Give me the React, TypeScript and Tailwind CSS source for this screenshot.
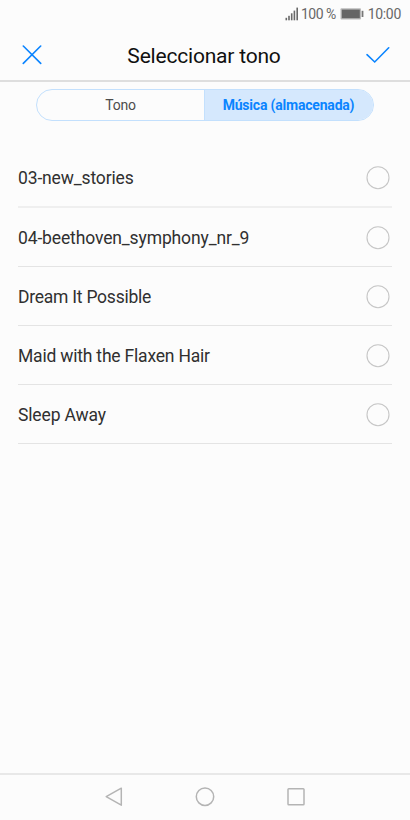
const songs = [
  { name: '03-new_stories', line: 'bg-[#efefef] h-[2px]', tracking: 'tracking-[-0.14px]' },
  { name: '04-beethoven_symphony_nr_9', line: 'bg-[#e4e4e4] h-px', tracking: 'tracking-[-0.13px]' },
  { name: 'Dream It Possible', line: 'bg-[#e4e4e4] h-px', tracking: 'tracking-[-0.24px]' },
  { name: 'Maid with the Flaxen Hair', line: 'bg-[#e4e4e4] h-px', tracking: 'tracking-[-0.2px]' },
  { name: 'Sleep Away', line: 'bg-[#e4e4e4] h-px', tracking: 'tracking-[-0.14px]' },
];

function StatusBar() {
  return (
    <div className="flex h-7 shrink-0 items-center justify-end pr-[9px] text-[14px] leading-7 text-[#686868]">
      <svg className="mr-[2px]" width="14" height="14" viewBox="0 0 14 14" fill="#686868">
        <rect x="0.5" y="10.8" width="1.6" height="2.5" />
        <rect x="3.2" y="8.8" width="1.6" height="4.5" />
        <rect x="5.9" y="6.3" width="1.6" height="7" />
        <rect x="8.6" y="3.6" width="1.6" height="9.7" />
        <rect x="11.4" y="0.6" width="1.6" height="12.7" />
      </svg>
      <span className="tracking-[-0.55px]">100 %</span>
      <svg className="mr-1 ml-[4px]" width="24" height="12" viewBox="0 0 24 12">
        <rect x="0.5" y="0.2" width="20.5" height="11.3" rx="1" fill="#b9b9b9" />
        <rect x="1.8" y="1.6" width="18" height="8.6" fill="#656565" />
        <rect x="21.6" y="2.8" width="1.8" height="6.2" fill="#777" />
      </svg>
      <span className="tracking-[-0.3px]">10:00</span>
    </div>
  );
}

export default function App() {
  return (
    <div className="flex h-[820px] w-[410px] flex-col overflow-hidden bg-[#fcfcfc] font-['Roboto',sans-serif]">
      <StatusBar />
      <header className="flex h-[54px] shrink-0 items-center justify-between border-b-2 border-[#dedede] px-[22px] pt-[2px]">
        <svg width="20" height="20" viewBox="0 0 20 20" fill="none" stroke="#0a84ff" strokeWidth="1.6" strokeLinecap="round">
          <path d="M1.3 1 18.7 18.4M18.7 1 1.3 18.4" />
        </svg>
        <h1 className="pt-[2px] text-[21px] leading-7 tracking-[-0.2px] text-[#101010]">Seleccionar tono</h1>
        <svg className="-mr-[2px]" width="24" height="18" viewBox="0 0 24 18" fill="none" stroke="#0a84ff" strokeWidth="1.6" strokeLinecap="round">
          <path d="M1 8.7 8.7 16 22.7 1.8" />
        </svg>
      </header>
      <div className="mt-[7px] ml-9 flex h-8 w-[338px] shrink-0 overflow-hidden rounded-full border border-[#c3e0fd] text-[14px]">
        <button className="w-[167px] tracking-[-0.2px] text-[#4d4d4d]">Tono</button>
        <button className="flex-1 border-l border-[#c3e0fd] bg-[#d5e8fd] pr-px font-bold tracking-[-0.2px] text-[#0a84ff]">Música (almacenada)</button>
      </div>
      <ul className="mx-[18px] mt-[28px] flex-1">
        {songs.map((s) => (
          <li key={s.name} className="flex h-[59.1px] flex-col">
            <div className="flex flex-1 items-center justify-between pt-px pr-[2px]">
              <span className={`text-[17.5px] leading-6 text-[#303030] ${s.tracking}`}>{s.name}</span>
              <svg width="24" height="24" viewBox="0 0 24 24" fill="none" stroke="#c6c6c6" strokeWidth="1.1">
                <circle cx="12" cy="11.7" r="11" />
              </svg>
            </div>
            <div className={s.line} />
          </li>
        ))}
      </ul>
      <nav className="flex h-[47px] shrink-0 items-center justify-center gap-[71px] border-t-2 border-[#e8e8e8] pb-[2px]">
        <svg width="20" height="20" viewBox="0 0 20 20" fill="none" stroke="#b4b4b4" strokeWidth="1.5" strokeLinejoin="round">
          <path d="M17.3 1.2V18.2L2.2 9.7Z" />
        </svg>
        <svg width="20" height="20" viewBox="0 0 20 20" fill="none" stroke="#b4b4b4" strokeWidth="1.5">
          <circle cx="10" cy="9.7" r="8.7" />
        </svg>
        <svg width="20" height="20" viewBox="0 0 20 20" fill="none" stroke="#b4b4b4" strokeWidth="1.5">
          <rect x="2" y="1.8" width="16" height="16" rx="0.8" />
        </svg>
      </nav>
    </div>
  );
}
